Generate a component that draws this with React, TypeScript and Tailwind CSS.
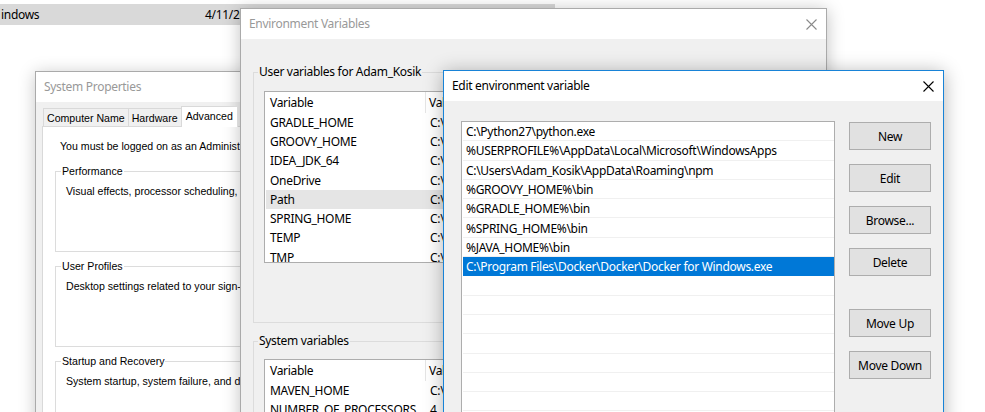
import React from "react";

function CloseX({ color }: { color: string }) {
  return (
    <svg width="11" height="11" viewBox="0 0 11 11">
      <path d="M0.5 0.5L10.5 10.5M10.5 0.5L0.5 10.5" stroke={color} strokeWidth="1.1" fill="none" />
    </svg>
  );
}

const userVars: [string, string][] = [
  ["GRADLE_HOME", "C:\\gradle-4.6"],
  ["GROOVY_HOME", "C:\\groovy-2.4.15"],
  ["IDEA_JDK_64", "C:\\Program Files\\Java\\jdk1.8.0_161"],
  ["OneDrive", "C:\\Users\\Adam_Kosik\\OneDrive"],
  ["Path", "C:\\Python27\\python.exe;%USERPROFILE%"],
  ["SPRING_HOME", "C:\\spring-2.0.1"],
  ["TEMP", "C:\\Users\\Adam_Kosik\\AppData\\Local\\Temp"],
  ["TMP", "C:\\Users\\Adam_Kosik\\AppData\\Local\\Temp"],
];

const sysVars: [string, string][] = [
  ["MAVEN_HOME", "C:\\apache-maven-3.5.3"],
  ["NUMBER_OF_PROCESSORS", "4"],
];

const paths = [
  "C:\\Python27\\python.exe",
  "%USERPROFILE%\\AppData\\Local\\Microsoft\\WindowsApps",
  "C:\\Users\\Adam_Kosik\\AppData\\Roaming\\npm",
  "%GROOVY_HOME%\\bin",
  "%GRADLE_HOME%\\bin",
  "%SPRING_HOME%\\bin",
  "%JAVA_HOME%\\bin",
  "C:\\Program Files\\Docker\\Docker\\Docker for Windows.exe",
  "",
  "",
  "",
  "",
  "",
  "",
  "",
];

function VarList({ rows, height, highlight }: { rows: [string, string][]; height: string; highlight?: number }) {
  return (
    <div className={`${height} w-[360px] bg-white border border-[#adadad] overflow-hidden`}>
      <div className="flex h-[20.5px] items-center">
        <div className="w-[161px] shrink-0 pl-[5px] border-r border-[#e5e5e5] h-full flex items-center pt-[1px]">Variable</div>
        <div className="pl-[3px] pt-[1px]">Value</div>
      </div>
      {rows.map(([k, v], i) => (
        <div
          key={k}
          className={`flex h-[19.3px] items-center ml-[1px] pt-[1px] ${i === highlight ? "bg-[#e5e5e5]" : ""}`}
        >
          <div className="w-[160px] shrink-0 pl-[4px] whitespace-nowrap">{k}</div>
          <div className="pl-[4px] whitespace-nowrap">{v}</div>
        </div>
      ))}
    </div>
  );
}

export default function App() {
  const seg = "font-['Noto_Sans',sans-serif]";
  const ms = "font-['Liberation_Sans',Arial,sans-serif]";
  return (
    <div className={`relative w-[985px] h-[412px] overflow-hidden bg-white text-[12px] leading-[16px] tracking-[-0.3px] text-black ${seg}`}>
      {/* Explorer row behind */}
      <div className="absolute left-0 top-[4px] w-[555px] h-[21px] bg-[#d9d9d9] flex items-center whitespace-nowrap">
        <span className="w-[205px] pl-[1px]">indows</span>
        <span>4/11/2018 9:41 PM</span>
      </div>

      {/* System Properties */}
      <div className="absolute left-[35px] top-[71px] w-[300px] h-[360px] bg-[#f0f0f0] border border-[#aaaaaa] shadow-[0_2px_16px_rgba(0,0,0,0.22)] flex flex-col">
        <div className="h-[30px] shrink-0 bg-white flex items-center pl-[8px] text-[#999999]">System Properties</div>
        <div className={`h-[24px] shrink-0 flex items-end pl-[7px] ${ms} text-[10.6px] leading-[14px] tracking-normal`}>
          <div className="h-[18px] px-[3px] flex items-center bg-[#f0f0f0] border-t border-l border-[#d9d9d9]">Computer Name</div>
          <div className="h-[18px] px-[3px] flex items-center bg-[#f0f0f0] border-t border-l border-[#d9d9d9]">Hardware</div>
          <div className="h-[21px] px-[4px] flex items-start pt-[2px] bg-white border-t border-l border-r border-[#d9d9d9] -mb-[1px] relative z-10">Advanced</div>
        </div>
        <div className={`flex-1 ml-[6px] bg-white border border-[#d9d9d9] pt-[12px] ${ms} text-[10.6px] leading-[14px] tracking-normal`}>
          <div className="pl-[17px] whitespace-nowrap">You must be logged on as an Administrator to make most of these changes.</div>
          <fieldset className="ml-[12px] mt-[11px] w-[260px] h-[88px] border border-[#dcdcdc]">
            <legend className="ml-[5px] px-[1px]">Performance</legend>
            <div className="pl-[10px] pt-[6px] whitespace-nowrap">Visual effects, processor scheduling, memory usage, and virtual memory</div>
          </fieldset>
          <fieldset className="ml-[12px] mt-[7px] w-[260px] h-[88px] border border-[#dcdcdc]">
            <legend className="ml-[5px] px-[1px]">User Profiles</legend>
            <div className="pl-[10px] pt-[6px] whitespace-nowrap">Desktop settings related to your sign-in</div>
          </fieldset>
          <fieldset className="ml-[12px] mt-[7px] w-[260px] h-[88px] border border-[#dcdcdc]">
            <legend className="ml-[5px] px-[1px]">Startup and Recovery</legend>
            <div className="pl-[10px] pt-[6px] whitespace-nowrap">System startup, system failure, and debugging information</div>
          </fieldset>
        </div>
      </div>

      {/* Environment Variables */}
      <div className="absolute left-[240px] top-[8px] w-[587px] h-[420px] bg-[#f0f0f0] border border-[#aaaaaa] shadow-[0_2px_16px_rgba(0,0,0,0.25)] flex flex-col">
        <div className="h-[30px] shrink-0 bg-white flex items-center justify-between pl-[8px] pr-[9px] text-[#999999]">
          <span>Environment Variables</span>
          <CloseX color="#8a8a8a" />
        </div>
        <fieldset className="shrink-0 ml-[12px] mt-[25px] w-[560px] h-[259px] border border-[#dcdcdc]">
          <legend className="ml-[4px] px-[1px] leading-[16px]">User variables for Adam_Kosik</legend>
          <div className="mt-[11px] ml-[10px]">
            <VarList rows={userVars} height="h-[172px]" highlight={4} />
          </div>
        </fieldset>
        <fieldset className="shrink-0 ml-[12px] mt-[10px] w-[560px] h-[200px] border border-[#dcdcdc]">
          <legend className="ml-[4px] px-[1px] leading-[16px]">System variables</legend>
          <div className="mt-[10px] ml-[10px]">
            <VarList rows={sysVars} height="h-[172px]" />
          </div>
        </fieldset>
      </div>

      {/* Edit environment variable */}
      <div className="absolute left-[443px] top-[70px] w-[501px] h-[360px] bg-[#f0f0f0] border border-[#1883d7] shadow-[0_2px_18px_rgba(0,0,0,0.3)] flex flex-col">
        <div className="h-[30px] shrink-0 bg-white flex items-center justify-between pl-[8px] pr-[9px]">
          <span>Edit environment variable</span>
          <CloseX color="#000000" />
        </div>
        <div className="flex pl-[17px] pt-[20px]">
          <div className="w-[374px] h-[320px] bg-white border border-[#adadad] overflow-hidden">
            {paths.map((p, i) => (
              <div
                key={i}
                className={`h-[19.3px] flex items-center ml-[1px] pl-[3px] pt-[2px] whitespace-nowrap border-b ${
                  i === 7 ? "bg-[#0078d7] text-white border-[#0078d7]" : "border-[#f0f0f0]"
                }`}
              >
                {p}
              </div>
            ))}
          </div>
          <div className="ml-[14px] mt-[1px] w-[82px] flex flex-col">
            {["New", "Edit", "Browse...", "Delete"].map((b) => (
              <button
                key={b}
                className="h-[28px] mb-[14px] pt-[1px] bg-[#e1e1e1] border border-[#adadad] flex items-center justify-center"
              >
                {b}
              </button>
            ))}
            <div className="h-[19px]" />
            {["Move Up", "Move Down"].map((b) => (
              <button
                key={b}
                className="h-[28px] mb-[14px] pt-[1px] bg-[#e1e1e1] border border-[#adadad] flex items-center justify-center"
              >
                {b}
              </button>
            ))}
          </div>
        </div>
      </div>
    </div>
  );
}
